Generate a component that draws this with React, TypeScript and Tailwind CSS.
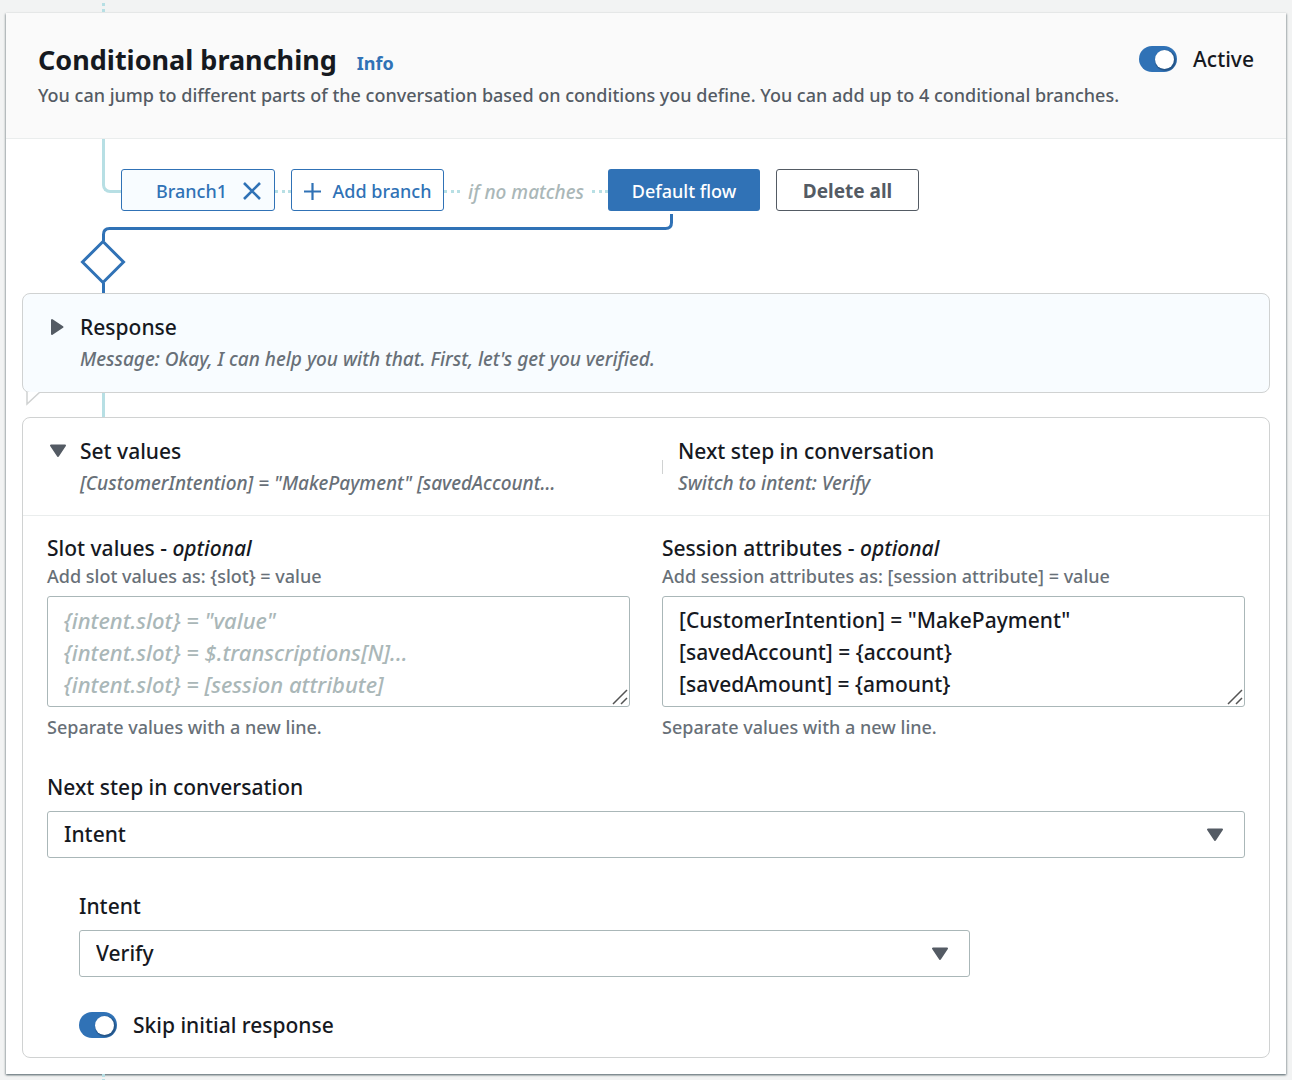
import { useState } from "react";
import type { ReactNode } from "react";

function Toggle({ id, label }: { id: string; label: string }) {
  const [on, setOn] = useState(true);
  return (
    <div className="flex items-center gap-4">
      <input
        id={id}
        type="checkbox"
        role="switch"
        checked={on}
        onChange={() => setOn(!on)}
        className="relative h-[26px] w-[38px] shrink-0 appearance-none rounded-full bg-[#879596] before:absolute before:left-[3px] before:top-[4px] before:size-[19px] before:rounded-full before:bg-white before:shadow-[1px_1px_1px_1px_rgba(0,0,0,0.25)] checked:bg-[#3072b6] checked:before:left-[16px]"
      />
      <label htmlFor={id} className="text-[21px] leading-8 whitespace-nowrap">
        {label}
      </label>
    </div>
  );
}

function Dots() {
  return (
    <svg className="mt-[2px] h-[3px] w-4 shrink-0" viewBox="0 0 16 3" fill="#b7dfe4" aria-hidden="true">
      <rect x="0" width="3" height="3" />
      <rect x="7" width="3" height="3" />
      <rect x="13" width="3" height="3" />
    </svg>
  );
}

function CaretDown({ className }: { className: string }) {
  return (
    <svg className={className} width="18" height="14" viewBox="0 0 18 14" aria-hidden="true">
      <path d="M2 1.500H16L9 12Z" fill="#545b64" stroke="#545b64" strokeWidth="2" strokeLinejoin="round" />
    </svg>
  );
}

function CaretRight({ className }: { className: string }) {
  return (
    <svg className={className} width="14" height="18" viewBox="0 0 14 18" aria-hidden="true">
      <path d="M2 2V16L12.500 9Z" fill="#545b64" stroke="#545b64" strokeWidth="2" strokeLinejoin="round" />
    </svg>
  );
}

function Area({
  id,
  title,
  hint,
  placeholder,
  value,
}: {
  id: string;
  title: string;
  hint: string;
  placeholder?: string;
  value?: string;
}) {
  return (
    <div>
      <label htmlFor={id} className="block text-[21px] leading-8">
        {title} - <i>optional</i>
      </label>
      <p className="text-[18px] leading-6 text-[#687078]">{hint}</p>
      <div className="relative mt-2">
        <textarea
          id={id}
          rows={3}
          placeholder={placeholder}
          defaultValue={value}
          className="block h-[111px] w-full resize-none overflow-hidden rounded-[3px] border border-[#aab7b8] bg-white px-4 py-[7px] text-[21px] leading-8 placeholder:text-[22px] placeholder:text-[#aab7b8] placeholder:italic"
        />
        <svg
          className="pointer-events-none absolute right-[2px] bottom-[2px]"
          width="16"
          height="16"
          viewBox="0 0 16 16"
          stroke="#545454"
          strokeWidth="1.5"
          aria-hidden="true"
        >
          <path d="M1 15L15 1M9 15L15 9" />
        </svg>
      </div>
      <p className="mt-2 text-[18px] leading-6 text-[#687078]">Separate values with a new line.</p>
    </div>
  );
}

function Select({ id, label, value }: { id: string; label: string; value: string }) {
  return (
    <div>
      <label htmlFor={id} className="block text-[21px] leading-8">
        {label}
      </label>
      <div className="relative mt-2">
        <select
          id={id}
          defaultValue={value}
          className="block h-[47px] w-full appearance-none rounded-[3px] border border-[#aab7b8] bg-white px-4 text-[21px]"
        >
          <option>{value}</option>
        </select>
        <CaretDown className="pointer-events-none absolute top-[17px] right-[21px]" />
      </div>
    </div>
  );
}

function Summary({ title, children }: { title: string; children: ReactNode }) {
  return (
    <div className="min-w-0">
      <h3 className="text-[21px] leading-8 font-medium">{title}</h3>
      <p className="text-[19px] leading-8 text-[#687078] italic">{children}</p>
    </div>
  );
}

export default function App() {
  return (
    <div className="min-h-screen bg-[#f2f3f3] px-[6px] font-['Noto_Sans',sans-serif] font-medium text-[#16191f]">
      <svg className="ml-24 block" width="3" height="13" viewBox="0 0 3 13" fill="#b7dfe4" aria-hidden="true">
        <rect y="3" width="3" height="3" />
        <rect y="9" width="3" height="3" />
      </svg>
      <section className="bg-white shadow-[0_1px_2px_0_rgba(0,28,36,0.5),1px_1px_2px_0_rgba(0,28,36,0.15),-1px_1px_2px_0_rgba(0,28,36,0.15)]">
        <header className="flex items-start justify-between border-b border-[#eaeded] bg-[#fafafa] px-8 pt-7 pb-7">
          <div>
            <div className="flex items-baseline gap-5 pt-px">
              <h2 className="text-[27px] leading-9 font-bold">Conditional branching</h2>
              <a href="#info" className="text-[18px] font-bold text-[#3072b6]">
                Info
              </a>
            </div>
            <p className="pt-[3px] text-[18px] leading-[29px] text-[#545b64]">
              You can jump to different parts of the conversation based on conditions you define. You can add up to 4
              conditional branches.
            </p>
          </div>
          <div className="pt-[2px]">
            <Toggle id="active" label="Active" />
          </div>
        </header>

        <div className="px-4 pb-4">
          <div className="flex items-start pl-20">
            <div className="h-[54px] w-[19px] shrink-0 rounded-bl-lg border-b-3 border-l-3 border-[#b7dfe4]" />
            <div className="flex items-center pt-[30px]">
              <div className="flex h-[42px] w-[154px] items-center justify-end gap-4 rounded-[3px] border border-[#3072b6] bg-[#f8fcff] pt-[2px] pr-[13px] text-[#3072b6]">
                <button className="text-[18px]">Branch1</button>
                <button aria-label="Remove Branch1">
                  <svg width="18" height="18" viewBox="0 0 18 18" stroke="currentColor" strokeWidth="2.6">
                    <path d="M1 1L17 17M17 1L1 17" />
                  </svg>
                </button>
              </div>
              <Dots />
              <button className="flex h-[42px] w-[153px] items-center justify-center gap-3 rounded-[3px] border border-[#3072b6] pt-[2px] text-[18px] whitespace-nowrap text-[#3072b6]">
                <svg width="17" height="17" viewBox="0 0 17 17" stroke="currentColor" strokeWidth="2.2" aria-hidden="true">
                  <path d="M8.5 0V17M0 8.5H17" />
                </svg>
                Add branch
              </button>
              <Dots />
              <span className="w-[132px] pt-1 text-center text-[19px] whitespace-nowrap text-[#aab7b8] italic">
                if no matches
              </span>
              <Dots />
              <button className="h-[42px] w-[152px] rounded-[3px] bg-[#3072b6] pt-[2px] text-[18px] text-white">
                Default flow
              </button>
              <button className="ml-4 h-[42px] w-[143px] rounded-[3px] border border-[#545b64] pt-[2px] text-[19px] font-bold text-[#545b64]">
                Delete all
              </button>
            </div>
          </div>

          <svg
            className="ml-14 block"
            width="600"
            height="82"
            viewBox="0 0 600 82"
            fill="none"
            stroke="#3072b6"
            strokeWidth="3"
            aria-hidden="true"
          >
            <path d="M593.500 3V11.500Q593.500 17.500 587.500 17.500H31.500Q25.500 17.500 25.500 23.500V30M25.500 72V82" />
            <path d="M25 30.500L45.500 51L25 71.500L4.500 51Z" />
          </svg>

          <div className="relative rounded-lg border border-[#d0d2d2] bg-[#f8fcff] pt-[17px] pr-7 pb-[17px] pl-[27px]">
            <button className="flex w-full items-start gap-4 text-left">
              <CaretRight className="mt-[7px] shrink-0" />
              <Summary title="Response">
                Message: Okay, I can help you with that. First, let's get you verified.
              </Summary>
            </button>
            <svg className="absolute top-full left-[3px]" width="15" height="14" viewBox="0 0 15 14" aria-hidden="true">
              <path d="M1 -1V12L14 0" fill="white" stroke="#d0d2d2" strokeWidth="1.500" />
            </svg>
          </div>
          <div className="ml-20 h-6 w-[3px] bg-[#b7dfe4]" />

          <div className="rounded-lg border border-[#d0d2d2]">
            <div className="grid grid-cols-2 border-b border-[#eaeded] pt-[17px] pb-4">
              <button className="flex min-w-0 items-start gap-[13px] pr-6 pl-[26px] text-left">
                <CaretDown className="mt-[9px] shrink-0" />
                <Summary title="Set values">[CustomerIntention] = "MakePayment" [savedAccount…</Summary>
              </button>
              <div className="flex items-center gap-[15px] pl-4">
                <div className="h-[14px] w-px bg-[#d0d2d2]" />
                <Summary title="Next step in conversation">Switch to intent: Verify</Summary>
              </div>
            </div>

            <div className="px-6 pt-4 pb-4">
              <div className="grid grid-cols-2 gap-8">
                <Area
                  id="slots"
                  title="Slot values"
                  hint="Add slot values as: {slot} = value"
                  placeholder={'{intent.slot} = "value"\n{intent.slot} = $.transcriptions[N]...\n{intent.slot} = [session attribute]'}
                />
                <Area
                  id="session"
                  title="Session attributes"
                  hint="Add session attributes as: [session attribute] = value"
                  value={'[CustomerIntention] = "MakePayment"\n[savedAccount] = {account}\n[savedAmount] = {amount}'}
                />
              </div>
              <div className="mt-8">
                <Select id="next-step" label="Next step in conversation" value="Intent" />
              </div>
              <div className="mt-8 w-[calc(75%+24px)] pl-8">
                <Select id="intent" label="Intent" value="Verify" />
              </div>
              <div className="mt-8 pl-8">
                <Toggle id="skip" label="Skip initial response" />
              </div>
            </div>
          </div>
        </div>
      </section>
      <svg className="relative ml-24 block" width="3" height="6" viewBox="0 0 3 6" fill="#b7dfe4" aria-hidden="true">
        <rect width="3" height="3" />
        <rect y="5" width="3" height="1" />
      </svg>
    </div>
  );
}
